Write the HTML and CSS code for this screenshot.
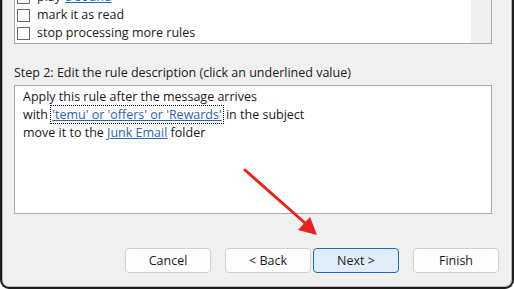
FILE: index.html
```html
<!DOCTYPE html>
<html lang="en">
<head>
  <meta charset="UTF-8">
  <title>Rules Wizard</title>
  <link rel="stylesheet" href="styles.css">
</head>
<body>
  <div class="window">
    <div class="action-list">
      <div class="action-rows">
        <div class="action-row"><span class="check"></span>play <a class="value">a sound</a></div>
        <div class="action-row"><span class="check"></span>mark it as read</div>
        <div class="action-row"><span class="check"></span>stop processing more rules</div>
      </div>
      <div class="scroll-track"></div>
    </div>

    <div class="step-label">Step 2: Edit the rule description (click an underlined value)</div>

    <div class="description">
      <div>Apply this rule after the message arrives</div>
      <div>with <a class="value focused">'temu' or 'offers' or 'Rewards'</a> in the subject</div>
      <div>move it to the <a class="value">Junk Email</a> folder</div>
    </div>

    <div class="buttons">
      <button class="btn">Cancel</button>
      <div class="nav-pair">
        <button class="btn">&lt; Back</button>
        <button class="btn primary">Next &gt;</button>
      </div>
      <button class="btn">Finish</button>
    </div>
  </div>

  <!-- red arrow pointing at Next -->
  <svg class="arrow" width="514" height="289" viewBox="0 0 514 289">
    <line x1="245" y1="170" x2="305" y2="223" stroke="#e8231b" stroke-width="3" stroke-linecap="round"/>
    <polygon points="317,235 298,230 310,217" fill="#e8231b"/>
  </svg>
</body>
</html>
```

FILE: styles.css
```css
* {
  margin: 0;
  padding: 0;
  box-sizing: border-box;
}

body {
  background-color: #ffffff;
  font-family: 'Segoe UI', 'Open Sans', 'Noto Sans', sans-serif;
  font-size: 12.5px;
  color: #1a1a1a;
  overflow: hidden;
}

.window {
  width: 514px;
  height: 289px;
  background-color: #f0f0f0;
  border: 2px solid #1e1e1e;
  border-top: none;
  border-radius: 0 0 9px 9px;
  box-shadow: inset 1px 0 #b4b4b4, inset -1px 0 #b4b4b4, inset 0 -1px #b4b4b4;
  padding: 0 20px 0 12px;
  overflow: hidden;
}

.action-list {
  display: flex;
  margin-top: -14px;
  height: 58px;
  background-color: #ffffff;
  border: 1px solid #a9a9b0;
}

.action-rows {
  flex: 1;
  padding: 1px 0 0 2px;
}

.action-row {
  display: flex;
  align-items: center;
  height: 18px;
  line-height: 18px;
  white-space: nowrap;
}

.check {
  width: 13px;
  height: 13px;
  border: 1px solid #6a6a6a;
  background-color: #ffffff;
  margin-right: 7px;
  flex-shrink: 0;
}

.scroll-track {
  width: 20px;
  background-color: #efefef;
}

.value {
  color: #2b62b5;
  text-decoration: underline;
  cursor: pointer;
}

.action-row .value {
  margin-left: 4px;
}

.step-label {
  margin-top: 20px;
  line-height: 18px;
  white-space: nowrap;
}

.description {
  margin-top: 3px;
  height: 129px;
  background-color: #ffffff;
  border: 1px solid #a9a9b0;
  padding: 2px 8px;
  line-height: 18px;
  white-space: nowrap;
}

.focused {
  outline: 1px dotted #000000;
  outline-offset: 0;
  padding: 0 1px;
}

.buttons {
  display: flex;
  align-items: center;
  justify-content: flex-end;
  gap: 14px;
  margin-top: 34px;
  margin-right: -7px;
}

.nav-pair {
  display: flex;
  gap: 2px;
}

.btn {
  width: 86px;
  height: 25px;
  background-color: #fdfdfd;
  border: 1px solid #d0d0d0;
  border-radius: 4px;
  font-family: inherit;
  font-size: 12.5px;
  color: #1a1a1a;
}

.btn.primary {
  background-color: #e0ecf8;
  border-color: #1a6ec2;
}

.arrow {
  position: absolute;
  left: 0;
  top: 0;
  pointer-events: none;
}
```
